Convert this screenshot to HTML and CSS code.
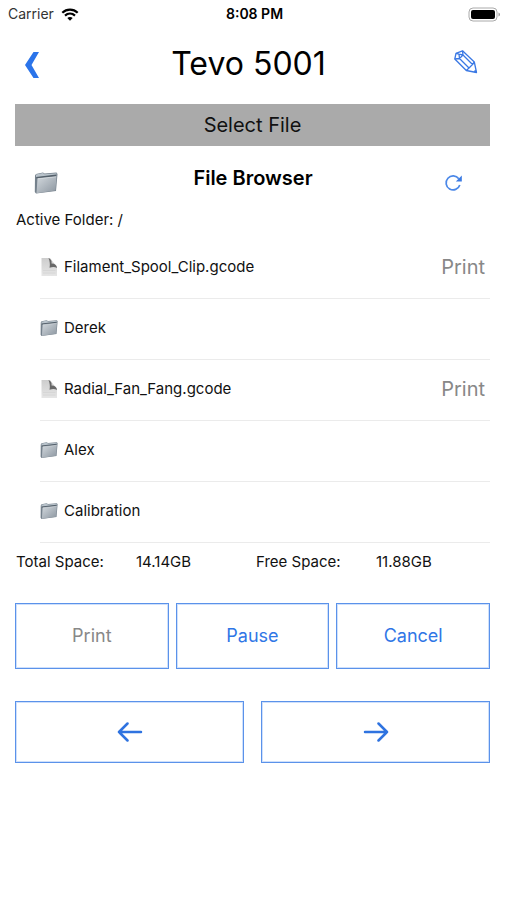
FILE: index.html
```html
<!DOCTYPE html>
<html lang="en">
<head>
<meta charset="utf-8">
<meta name="viewport" content="width=device-width, initial-scale=1">
<title>Tevo 5001</title>
<link rel="stylesheet" href="styles.css">
</head>
<body>
<svg class="defs" aria-hidden="true">
  <defs>
    <linearGradient id="front" x1="0" y1="0" x2="1" y2="1">
      <stop offset="0" stop-color="#d3d9de"/>
      <stop offset="1" stop-color="#8b959f"/>
    </linearGradient>
    <linearGradient id="paper" x1="0" y1="0" x2="0" y2="1">
      <stop offset="0" stop-color="#cdcdcd"/>
      <stop offset="1" stop-color="#e6e6e6"/>
    </linearGradient>
    <symbol id="folder" viewBox="0 0 24 24">
      <path d="M1 4.500 2 3l7-1.500 1.500 1L22.500 1.500 23.500 3 22 20 2 22.500.8 21z" fill="#75818c"/>
      <path d="M2 3.500 9 2l1.500 1.300 12-1-.3 2L2 6.500z" fill="#b9c3cb"/>
      <path d="M2 6 22 3.500v2.200L3 8z" fill="#54606b"/>
      <path d="M3.500 7.500 22.500 5.500 21.500 19.500 2.500 22.300z" fill="url(#front)"/>
      <path d="M3.500 7.700 22.300 5.700" stroke="#e3e7ea" stroke-width=".7"/>
    </symbol>
    <symbol id="file" viewBox="0 0 18 18">
      <path d="M1.500 0h8.500l7 9v9H1.500z" fill="url(#paper)"/>
      <path d="M8.500 0c2.500 1 3.500 3 3 5.500 3-.2 5.300 1.500 5.500 4.500-2-1.200-4.500-1.200-7.500-.3.800-3.500.2-6.700-1-9.700z" fill="#686868"/>
      <path d="M3 12.500h12.500M3 15h12.500" stroke="#d6d6d6"/>
    </symbol>
  </defs>
</svg>

<header>
  <div class="status">
    <div class="carrier">
      <span>Carrier</span>
      <svg width="18" height="13" viewBox="0 0 18 13" fill="none" stroke="#000" stroke-width="2.200" aria-hidden="true">
        <path d="M1.300 4.700C5.700.5 12.300.5 16.700 4.700M4 7.600c2.900-2.700 7.100-2.700 10 0"/>
        <path d="M9 12.700 6.300 10c1.500-1.400 3.900-1.400 5.400 0z" fill="#000" stroke="none"/>
      </svg>
    </div>
    <time>8:08 PM</time>
    <svg class="battery" width="33" height="15" viewBox="0 0 33 15" aria-hidden="true">
      <rect x="1" y="1" width="28" height="13" rx="4" fill="#fff" stroke="#aaa"/>
      <rect x="3" y="3" width="24" height="9" rx="2"/>
      <path d="M30.500 5.500c2 .8 2 3.200 0 4z" fill="#999"/>
    </svg>
  </div>
  <nav class="nav">
    <button class="back" aria-label="Back">
      <svg width="14" height="26" viewBox="0 0 14 26"><path d="M8.500 0H14L6.500 13 14 26H8.500L0 13z" fill="#2b74ea"/></svg>
    </button>
    <h1>Tevo 5001</h1>
    <button class="edit" aria-label="Edit">
      <svg width="24" height="24" viewBox="0 0 24 24" fill="none" stroke="#3a78e4" stroke-width="1.300" stroke-linejoin="round">
        <path d="M8.500 .8 20.300 12 22.500 22.500 12.300 20.500.8 9 2 3.300z"/>
        <path d="M8.500 .8 9 5 5.500 8.500.8 9M2 3.300l3 .9L9 5M5 4.200l.5 4.300M9 5l9.500 9.500M5.500 8.500 15 18M12.300 20.500 15 18l3.500-3.500 1.800-2.500"/>
        <path d="m20.500 20.500 1.800 1.800" stroke-width="2"/>
      </svg>
    </button>
  </nav>
</header>

<main>
  <h2 class="banner">Select File</h2>
  <div class="browser-head">
    <svg width="24" height="24" aria-hidden="true"><use href="#folder"/></svg>
    <h3>File Browser</h3>
    <button aria-label="Refresh">
      <svg width="20" height="18" viewBox="0 0 20 18" fill="none" stroke="#4b88e8" stroke-width="1.700">
        <path d="M14.800 4.800A7 7 0 1 0 15.800 11"/>
        <path d="M17.800 1.500v6h-6z" fill="#3c7be3" stroke="none"/>
      </svg>
    </button>
  </div>
  <p class="active-folder">Active Folder: /</p>

  <ul class="files">
    <li><svg class="glyph" aria-hidden="true"><use href="#file"/></svg><span>Filament_Spool_Clip.gcode</span><button class="print">Print</button></li>
    <li><svg class="glyph" aria-hidden="true"><use href="#folder"/></svg><span>Derek</span></li>
    <li><svg class="glyph" aria-hidden="true"><use href="#file"/></svg><span>Radial_Fan_Fang.gcode</span><button class="print">Print</button></li>
    <li><svg class="glyph" aria-hidden="true"><use href="#folder"/></svg><span>Alex</span></li>
    <li><svg class="glyph" aria-hidden="true"><use href="#folder"/></svg><span>Calibration</span></li>
  </ul>

  <div class="space">
    <span>Total Space:</span><span>14.14GB</span><span>Free Space:</span><span>11.88GB</span>
  </div>

  <div class="actions">
    <button class="box" disabled>Print</button>
    <button class="box">Pause</button>
    <button class="box">Cancel</button>
  </div>
  <div class="pager">
    <button class="box" aria-label="Previous">
      <svg width="26" height="20" viewBox="0 0 26 20"><path d="M24 10H2M10.500 1.500 2 10l8.500 8.500"/></svg>
    </button>
    <button class="box" aria-label="Next">
      <svg width="26" height="20" viewBox="0 0 26 20"><path d="M2 10h22M15.500 1.500 24 10l-8.500 8.500"/></svg>
    </button>
  </div>
</main>
</body>
</html>
```
FILE: styles.css
```css
* {
  box-sizing: border-box;
}

body {
  margin: 0;
  background: #fff;
  color: #111;
  font-family: Inter, "Liberation Sans", sans-serif;
  font-size: 15px;
  line-height: 20px;
}

h1, h2, h3, p, ul {
  margin: 0;
  padding: 0;
  font-weight: 400;
}

button {
  padding: 0;
  border: 0;
  background: none;
  color: #2f76e6;
  font: inherit;
}

svg {
  display: block;
}

.defs {
  position: absolute;
  width: 0;
  height: 0;
}

.status,
.nav,
.browser-head {
  display: grid;
  align-items: center;
}

.status {
  grid-template-columns: 1fr auto 1fr;
  height: 28px;
  padding: 0 6px 0 8px;
  font-size: 14px;
}

.carrier {
  display: flex;
  align-items: center;
  gap: 7px;
  color: #333;
}

time {
  color: #000;
  font-weight: 600;
}

.battery {
  justify-self: end;
}

.nav {
  grid-template-columns: 14px 1fr 24px;
  height: 76px;
  padding: 0 29px 4px 25px;
}

h1 {
  padding-left: 4px;
  color: #000;
  font-size: 32px;
  line-height: 40px;
  text-align: center;
}

.back {
  padding-top: 2px;
}

.edit {
  padding-bottom: 4px;
}

main {
  padding: 0 17px 0 15px;
}

.banner {
  padding: 8px;
  background: #aaa;
  font-size: 20px;
  line-height: 26px;
  text-align: center;
}

.browser-head {
  grid-template-columns: 24px 1fr 20px;
  height: 64px;
  padding: 10px 26px 0 19px;
}

h3 {
  padding: 0 0 10px 4px;
  color: #000;
  font-size: 20px;
  font-weight: 600;
  line-height: 26px;
  text-align: center;
}

.active-folder {
  padding: 0 0 8px 1px;
}

.files {
  margin-left: 25px;
  list-style: none;
}

.files li {
  display: flex;
  align-items: center;
  height: 61px;
  gap: 6px;
  padding: 0 5px 2px 0;
  border-bottom: 1px solid #ebebeb;
}

.glyph {
  width: 18px;
  height: 18px;
}

.print {
  margin-left: auto;
  color: #888;
  font-size: 20px;
}

.space {
  display: grid;
  grid-template-columns: repeat(4, 1fr);
  gap: 6px;
  padding: 9px 0 31px 1px;
}

.actions,
.pager {
  display: grid;
  grid-auto-flow: column;
  grid-auto-columns: 1fr;
}

.actions {
  gap: 7px;
  padding-bottom: 32px;
}

.pager {
  gap: 17px;
}

.box {
  display: grid;
  place-items: center;
  height: 66px;
  border: 1px solid #5b92ea;
  outline: 1px solid #cfe0fb;
  outline-offset: -2px;
  font-size: 18px;
}

.pager .box {
  height: 62px;
}

.box:disabled {
  color: #888;
}

.box path {
  fill: none;
  stroke: #2f73e0;
  stroke-width: 2.500;
  stroke-linecap: round;
  stroke-linejoin: round;
}
```
